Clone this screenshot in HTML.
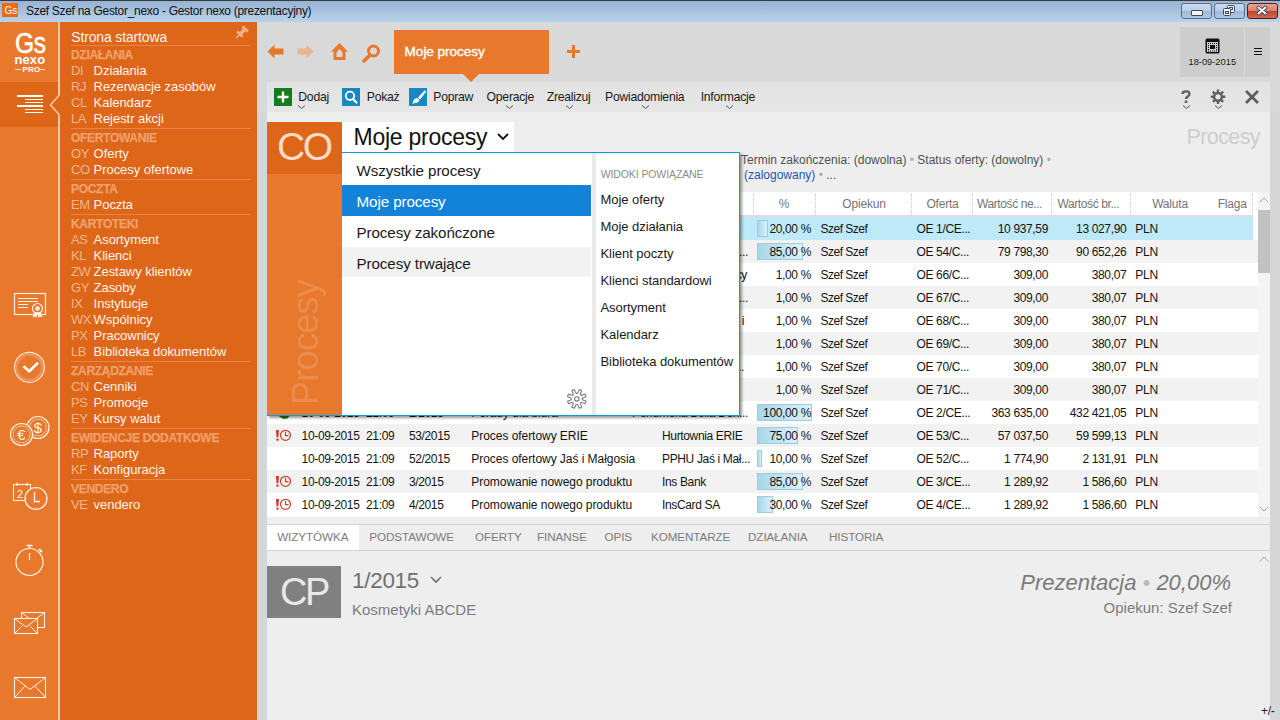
<!DOCTYPE html><html><head><meta charset="utf-8"><style>
html,body{margin:0;padding:0;width:1280px;height:720px;overflow:hidden;background:#EEEEEE;}
body{position:relative;font-family:"Liberation Sans",sans-serif;}
.t{position:absolute;white-space:nowrap;}
.r{position:absolute;display:block;}
</style></head><body>
<div class="r" style="left:0px;top:0px;width:1280px;height:1px;background:#3a3a3a;"></div>
<div class="r" style="left:0px;top:1px;width:1280px;height:21px;background:linear-gradient(#97B3D3,#BAD2EB);"></div>
<svg class="r" style="left:2px;top:3px;" width="16" height="14" viewBox="0 0 16 14"><rect width="16" height="14" fill="#EA6A14"/></svg>
<div class="t" style="top:5.54px;font-size:10px;line-height:10px;color:#fff;left:4.5px;">Gs</div>
<div class="t" style="top:4.84px;font-size:12px;line-height:12px;color:#111;letter-spacing:-0.3px;left:26px;">Szef Szef na Gestor_nexo - Gestor nexo (prezentacyjny)</div>
<div class="r" style="left:1181px;top:3px;width:29px;height:14px;border:1px solid #5C6F8A;border-radius:3px;background:linear-gradient(#C9DBEF 0%,#B6CDE8 50%,#9EBAD9 51%,#AFC8E6 100%);"></div>
<div class="r" style="left:1214px;top:3px;width:29px;height:14px;border:1px solid #5C6F8A;border-radius:3px;background:linear-gradient(#C9DBEF 0%,#B6CDE8 50%,#9EBAD9 51%,#AFC8E6 100%);"></div>
<div class="r" style="left:1247px;top:3px;width:29px;height:14px;border:1px solid #5A1A1A;border-radius:3px;background:linear-gradient(#E9A290 0%,#DB7F68 50%,#C4412A 51%,#D06A52 100%);"></div>
<div class="r" style="left:1191px;top:10px;width:10px;height:4px;background:#F4F4F4;border:1px solid #3C4A5C;border-radius:1px;"></div>
<svg class="r" style="left:1222px;top:5px;" width="14" height="12" viewBox="0 0 14 12"><rect x="5.5" y="0.5" width="7" height="7" rx="1" fill="#f2f2f2" stroke="#3C4A5C"/><rect x="7.5" y="2.5" width="3" height="2" fill="none" stroke="#3C4A5C"/><rect x="1.5" y="3.5" width="7" height="7" rx="1" fill="#f2f2f2" stroke="#3C4A5C"/><rect x="3.5" y="6.5" width="3" height="2" fill="none" stroke="#3C4A5C"/></svg>
<svg class="r" style="left:1255px;top:5px;" width="14" height="11" viewBox="0 0 14 11"><path d="M3.5 2.5 L10.5 8.5 M10.5 2.5 L3.5 8.5" stroke="#3C4A5C" stroke-width="3.8" stroke-linecap="round"/><path d="M3.5 2.5 L10.5 8.5 M10.5 2.5 L3.5 8.5" stroke="#F6F6F6" stroke-width="2" stroke-linecap="round"/></svg>
<div class="r" style="left:0px;top:22px;width:58px;height:698px;background:#E8792C;"></div>
<div class="r" style="left:0px;top:82px;width:58px;height:45px;background:#DE6619;"></div>
<div class="r" style="left:58px;top:22px;width:2px;height:698px;background:#F4C6A2;"></div>
<div class="r" style="left:60px;top:22px;width:197px;height:698px;background:#DE6619;"></div>
<div class="t" style="top:27.61px;font-size:30px;line-height:30px;color:#fff;letter-spacing:-0.5px;left:14.5px;transform:scaleX(0.82);transform-origin:0 0;-webkit-text-stroke:0.6px #fff;">Gs</div>
<div class="t" style="top:53.00px;font-size:13px;line-height:13px;color:#fff;letter-spacing:0.1px;left:14.5px;font-weight:bold;">nexo</div>
<div class="t" style="top:65.73px;font-size:8px;line-height:8px;color:#fff;letter-spacing:0.2px;left:22.5px;font-weight:bold;">PRO</div>
<div class="r" style="left:15px;top:69px;width:6px;height:1px;background:#F9D9C0;"></div>
<div class="r" style="left:39px;top:69px;width:6px;height:1px;background:#F9D9C0;"></div>
<div class="r" style="left:17px;top:95px;width:26px;height:2px;background:#fff;"></div>
<div class="r" style="left:25px;top:99px;width:18px;height:1px;background:#fff;"></div>
<div class="r" style="left:25px;top:102px;width:18px;height:1px;background:#fff;"></div>
<div class="r" style="left:17px;top:105px;width:26px;height:2px;background:#fff;"></div>
<div class="r" style="left:25px;top:109px;width:18px;height:1px;background:#fff;"></div>
<div class="r" style="left:25px;top:112px;width:18px;height:1px;background:#fff;"></div>
<div class="r" style="left:58px;top:95px;width:2px;height:21px;background:#DE6619;"></div>
<svg class="r" style="left:48px;top:93px;" width="13" height="24" viewBox="0 0 13 24"><path d="M11 1 L11 2.5 L2.5 12 L11 21.5 L11 24" fill="none" stroke="#F4C6A2" stroke-width="1.6"/></svg>
<svg class="r" style="left:12px;top:290px;" width="38" height="30" viewBox="0 0 38 30"><rect x="2.5" y="3.5" width="31" height="21" fill="none" stroke="#FDF0E6" stroke-width="1.2"/><path d="M6 8.5H26 M6 11.5H26 M6 14.5H16 M6 17.5H16" stroke="#FDF0E6" stroke-width="1"/><circle cx="25.5" cy="18.5" r="5" fill="#E8792C" stroke="#FDF0E6" stroke-width="1.2"/><circle cx="25.5" cy="18.5" r="2.3" fill="#FDF0E6"/><path d="M22.5 22 L20.5 27.5 L23 26.5 L24.5 28 L25.5 23 L26.5 28 L28 26.5 L30.5 27.5 L28.5 22" fill="#FDF0E6"/></svg>
<svg class="r" style="left:13px;top:351px;" width="34" height="34" viewBox="0 0 34 34"><circle cx="16.5" cy="16.3" r="15" fill="none" stroke="#FDF0E6" stroke-width="1.2" opacity="0.9"/><circle cx="16.5" cy="16.3" r="12.8" fill="none" stroke="#FDF0E6" stroke-width="2.6" opacity="0.22"/><path d="M10.5 15.3 L16.3 20.3 L25 11.8" fill="none" stroke="#fff" stroke-width="2.6"/></svg>
<svg class="r" style="left:8px;top:413px;" width="44" height="36" viewBox="0 0 44 36"><circle cx="30" cy="14.5" r="11" fill="#E8792C" stroke="#FDF0E6" stroke-width="1.2"/><circle cx="30" cy="14.5" r="8.5" fill="none" stroke="#FDF0E6" stroke-width="0.6"/><text x="30" y="20" font-family="Liberation Sans" font-size="15" fill="#FDF0E6" text-anchor="middle">$</text><circle cx="13.5" cy="21.5" r="11" fill="#E8792C" stroke="#FDF0E6" stroke-width="1.2"/><circle cx="13.5" cy="21.5" r="8.5" fill="none" stroke="#FDF0E6" stroke-width="0.6"/><text x="13.5" y="27" font-family="Liberation Sans" font-size="15" fill="#FDF0E6" text-anchor="middle">€</text></svg>
<svg class="r" style="left:10px;top:480px;" width="40" height="32" viewBox="0 0 40 32"><rect x="3.5" y="4.5" width="17" height="16" fill="none" stroke="#FDF0E6" stroke-width="1.1"/><path d="M7 2.5V6 M17 2.5V6" stroke="#FDF0E6" stroke-width="1.1"/><text x="7" y="17.5" font-family="Liberation Sans" font-size="11" fill="#FDF0E6">2</text><circle cx="26" cy="18.5" r="11" fill="#E8792C" stroke="#FDF0E6" stroke-width="1.2"/><path d="M24.5 12V21.5H30" fill="none" stroke="#FDF0E6" stroke-width="1.4"/><path d="M26 8.5V9.5 M26 27.5V28.5 M15.5 18.5H16.5 M35.5 18.5H36.5" stroke="#FDF0E6" stroke-width="1"/></svg>
<svg class="r" style="left:14px;top:543px;" width="32" height="34" viewBox="0 0 32 34"><circle cx="15.5" cy="19" r="13.5" fill="none" stroke="#FDF0E6" stroke-width="1.2"/><path d="M15.5 10V17" stroke="#FDF0E6" stroke-width="1.2"/><path d="M12.5 2.5H18.5 M15.5 2.5V5.5" stroke="#FDF0E6" stroke-width="1.6"/><path d="M25 6 L28 9" stroke="#FDF0E6" stroke-width="2"/></svg>
<svg class="r" style="left:12px;top:610px;" width="36" height="26" viewBox="0 0 36 26"><rect x="9.5" y="2.5" width="23" height="15" fill="#E8792C" stroke="#FDF0E6" stroke-width="1.1"/><path d="M9.5 2.5 L21 11 L32.5 2.5" fill="none" stroke="#FDF0E6" stroke-width="1"/><rect x="2.5" y="8.5" width="23" height="15" fill="#E8792C" stroke="#FDF0E6" stroke-width="1.1"/><path d="M2.5 8.5 L14 17 L25.5 8.5 M2.5 23.5 L10 16 M25.5 23.5 L18 16" fill="none" stroke="#FDF0E6" stroke-width="1"/></svg>
<svg class="r" style="left:12px;top:675px;" width="36" height="25" viewBox="0 0 36 25"><rect x="2.5" y="2.5" width="31" height="20" fill="none" stroke="#FDF0E6" stroke-width="1.1"/><path d="M2.5 2.5 L18 14.5 L33.5 2.5 M2.5 22.5 L13 11 M33.5 22.5 L23 11" fill="none" stroke="#FDF0E6" stroke-width="1"/></svg>
<div class="t" style="top:30.15px;font-size:14px;line-height:14px;color:#FDF3EA;letter-spacing:-0.15px;left:71.25px;">Strona startowa</div>
<svg class="r" style="left:233px;top:24px;" width="18" height="17" viewBox="0 0 18 17"><g stroke="#F0B088" stroke-linecap="butt"><path d="M9.5 2.5 L14.8 7.6" stroke-width="3"/><path d="M12.2 5 L7 10.2" stroke-width="3.6"/><path d="M4.1 7.5 L9.6 12.8" stroke-width="2.6"/><path d="M7 10.2 L3.2 14" stroke-width="1.4"/></g></svg>
<div class="r" style="left:71px;top:45px;width:180px;height:1px;background:#E6844A;"></div>
<div class="t" style="top:48.54px;font-size:12px;line-height:12px;color:#F0A06C;letter-spacing:-0.3px;left:71px;font-weight:bold;-webkit-text-stroke:0.25px #F0A06C;">DZIAŁANIA</div>
<div class="t" style="top:63.80px;font-size:13px;line-height:13px;color:#F0B48A;letter-spacing:-0.4px;left:71px;">DI</div>
<div class="t" style="top:63.80px;font-size:13px;line-height:13px;color:#FDF3EA;letter-spacing:-0.05px;left:93.6px;">Działania</div>
<div class="t" style="top:79.80px;font-size:13px;line-height:13px;color:#F0B48A;letter-spacing:-0.4px;left:71px;">RJ</div>
<div class="t" style="top:79.80px;font-size:13px;line-height:13px;color:#FDF3EA;letter-spacing:-0.05px;left:93.6px;">Rezerwacje zasobów</div>
<div class="t" style="top:95.80px;font-size:13px;line-height:13px;color:#F0B48A;letter-spacing:-0.4px;left:71px;">CL</div>
<div class="t" style="top:95.80px;font-size:13px;line-height:13px;color:#FDF3EA;letter-spacing:-0.05px;left:93.6px;">Kalendarz</div>
<div class="t" style="top:111.60px;font-size:13px;line-height:13px;color:#F0B48A;letter-spacing:-0.4px;left:71px;">LA</div>
<div class="t" style="top:111.60px;font-size:13px;line-height:13px;color:#FDF3EA;letter-spacing:-0.05px;left:93.6px;">Rejestr akcji</div>
<div class="r" style="left:71px;top:128px;width:180px;height:1px;background:#E6844A;"></div>
<div class="t" style="top:131.54px;font-size:12px;line-height:12px;color:#F0A06C;letter-spacing:-0.3px;left:71px;font-weight:bold;-webkit-text-stroke:0.25px #F0A06C;">OFERTOWANIE</div>
<div class="t" style="top:146.80px;font-size:13px;line-height:13px;color:#F0B48A;letter-spacing:-0.4px;left:71px;">OY</div>
<div class="t" style="top:146.80px;font-size:13px;line-height:13px;color:#FDF3EA;letter-spacing:-0.05px;left:93.6px;">Oferty</div>
<div class="t" style="top:162.80px;font-size:13px;line-height:13px;color:#F0B48A;letter-spacing:-0.4px;left:71px;">CO</div>
<div class="t" style="top:162.80px;font-size:13px;line-height:13px;color:#FDF3EA;letter-spacing:-0.05px;left:93.6px;">Procesy ofertowe</div>
<div class="r" style="left:71px;top:179px;width:180px;height:1px;background:#E6844A;"></div>
<div class="t" style="top:182.54px;font-size:12px;line-height:12px;color:#F0A06C;letter-spacing:-0.3px;left:71px;font-weight:bold;-webkit-text-stroke:0.25px #F0A06C;">POCZTA</div>
<div class="t" style="top:197.80px;font-size:13px;line-height:13px;color:#F0B48A;letter-spacing:-0.4px;left:71px;">EM</div>
<div class="t" style="top:197.80px;font-size:13px;line-height:13px;color:#FDF3EA;letter-spacing:-0.05px;left:93.6px;">Poczta</div>
<div class="r" style="left:71px;top:214px;width:180px;height:1px;background:#E6844A;"></div>
<div class="t" style="top:217.54px;font-size:12px;line-height:12px;color:#F0A06C;letter-spacing:-0.3px;left:71px;font-weight:bold;-webkit-text-stroke:0.25px #F0A06C;">KARTOTEKI</div>
<div class="t" style="top:232.80px;font-size:13px;line-height:13px;color:#F0B48A;letter-spacing:-0.4px;left:71px;">AS</div>
<div class="t" style="top:232.80px;font-size:13px;line-height:13px;color:#FDF3EA;letter-spacing:-0.05px;left:93.6px;">Asortyment</div>
<div class="t" style="top:248.80px;font-size:13px;line-height:13px;color:#F0B48A;letter-spacing:-0.4px;left:71px;">KL</div>
<div class="t" style="top:248.80px;font-size:13px;line-height:13px;color:#FDF3EA;letter-spacing:-0.05px;left:93.6px;">Klienci</div>
<div class="t" style="top:264.80px;font-size:13px;line-height:13px;color:#F0B48A;letter-spacing:-0.4px;left:71px;">ZW</div>
<div class="t" style="top:264.80px;font-size:13px;line-height:13px;color:#FDF3EA;letter-spacing:-0.05px;left:93.6px;">Zestawy klientów</div>
<div class="t" style="top:280.80px;font-size:13px;line-height:13px;color:#F0B48A;letter-spacing:-0.4px;left:71px;">GY</div>
<div class="t" style="top:280.80px;font-size:13px;line-height:13px;color:#FDF3EA;letter-spacing:-0.05px;left:93.6px;">Zasoby</div>
<div class="t" style="top:296.80px;font-size:13px;line-height:13px;color:#F0B48A;letter-spacing:-0.4px;left:71px;">IX</div>
<div class="t" style="top:296.80px;font-size:13px;line-height:13px;color:#FDF3EA;letter-spacing:-0.05px;left:93.6px;">Instytucje</div>
<div class="t" style="top:312.80px;font-size:13px;line-height:13px;color:#F0B48A;letter-spacing:-0.4px;left:71px;">WX</div>
<div class="t" style="top:312.80px;font-size:13px;line-height:13px;color:#FDF3EA;letter-spacing:-0.05px;left:93.6px;">Wspólnicy</div>
<div class="t" style="top:328.80px;font-size:13px;line-height:13px;color:#F0B48A;letter-spacing:-0.4px;left:71px;">PX</div>
<div class="t" style="top:328.80px;font-size:13px;line-height:13px;color:#FDF3EA;letter-spacing:-0.05px;left:93.6px;">Pracownicy</div>
<div class="t" style="top:344.80px;font-size:13px;line-height:13px;color:#F0B48A;letter-spacing:-0.4px;left:71px;">LB</div>
<div class="t" style="top:344.80px;font-size:13px;line-height:13px;color:#FDF3EA;letter-spacing:-0.05px;left:93.6px;">Biblioteka dokumentów</div>
<div class="r" style="left:71px;top:361px;width:180px;height:1px;background:#E6844A;"></div>
<div class="t" style="top:364.54px;font-size:12px;line-height:12px;color:#F0A06C;letter-spacing:-0.3px;left:71px;font-weight:bold;-webkit-text-stroke:0.25px #F0A06C;">ZARZĄDZANIE</div>
<div class="t" style="top:379.80px;font-size:13px;line-height:13px;color:#F0B48A;letter-spacing:-0.4px;left:71px;">CN</div>
<div class="t" style="top:379.80px;font-size:13px;line-height:13px;color:#FDF3EA;letter-spacing:-0.05px;left:93.6px;">Cenniki</div>
<div class="t" style="top:395.80px;font-size:13px;line-height:13px;color:#F0B48A;letter-spacing:-0.4px;left:71px;">PS</div>
<div class="t" style="top:395.80px;font-size:13px;line-height:13px;color:#FDF3EA;letter-spacing:-0.05px;left:93.6px;">Promocje</div>
<div class="t" style="top:411.80px;font-size:13px;line-height:13px;color:#F0B48A;letter-spacing:-0.4px;left:71px;">EY</div>
<div class="t" style="top:411.80px;font-size:13px;line-height:13px;color:#FDF3EA;letter-spacing:-0.05px;left:93.6px;">Kursy walut</div>
<div class="r" style="left:71px;top:428px;width:180px;height:1px;background:#E6844A;"></div>
<div class="t" style="top:431.54px;font-size:12px;line-height:12px;color:#F0A06C;letter-spacing:-0.3px;left:71px;font-weight:bold;-webkit-text-stroke:0.25px #F0A06C;">EWIDENCJE DODATKOWE</div>
<div class="t" style="top:446.80px;font-size:13px;line-height:13px;color:#F0B48A;letter-spacing:-0.4px;left:71px;">RP</div>
<div class="t" style="top:446.80px;font-size:13px;line-height:13px;color:#FDF3EA;letter-spacing:-0.05px;left:93.6px;">Raporty</div>
<div class="t" style="top:462.80px;font-size:13px;line-height:13px;color:#F0B48A;letter-spacing:-0.4px;left:71px;">KF</div>
<div class="t" style="top:462.80px;font-size:13px;line-height:13px;color:#FDF3EA;letter-spacing:-0.05px;left:93.6px;">Konfiguracja</div>
<div class="r" style="left:71px;top:479px;width:180px;height:1px;background:#E6844A;"></div>
<div class="t" style="top:482.54px;font-size:12px;line-height:12px;color:#F0A06C;letter-spacing:-0.3px;left:71px;font-weight:bold;-webkit-text-stroke:0.25px #F0A06C;">VENDERO</div>
<div class="t" style="top:497.80px;font-size:13px;line-height:13px;color:#F0B48A;letter-spacing:-0.4px;left:71px;">VE</div>
<div class="t" style="top:497.80px;font-size:13px;line-height:13px;color:#FDF3EA;letter-spacing:-0.05px;left:93.6px;">vendero</div>
<div class="r" style="left:257px;top:22px;width:1023px;height:698px;background:#D6D6D6;"></div>
<div class="r" style="left:257px;top:22px;width:1023px;height:90px;background:#D9D9D9;"></div>
<svg class="r" style="left:266px;top:44px;" width="19" height="15" viewBox="0 0 19 15"><path d="M1.5 7.5 L8.5 0.5 V4.5 H17.5 V10.5 H8.5 V14.5 Z" fill="#E8792C"/></svg>
<svg class="r" style="left:296px;top:44px;" width="19" height="15" viewBox="0 0 19 15"><path d="M17.5 7.5 L10.5 0.5 V4.5 H1.5 V10.5 H10.5 V14.5 Z" fill="#EBB48C"/></svg>
<svg class="r" style="left:330px;top:42px;" width="19" height="19" viewBox="0 0 19 19"><path d="M9.5 1 L18 9.5 H15.5 V18 H3.5 V9.5 H1 Z M6.5 10.5 V15 H12.5 V10.5 L9.5 7 Z" fill="#E8792C" fill-rule="evenodd"/></svg>
<svg class="r" style="left:362px;top:44px;" width="19" height="19" viewBox="0 0 19 19"><circle cx="11.5" cy="7" r="5" fill="none" stroke="#E8792C" stroke-width="3"/><path d="M8 11 L2 17" stroke="#E8792C" stroke-width="3.6" stroke-linecap="round"/></svg>
<div class="r" style="left:394px;top:30px;width:155px;height:44px;background:#E8792C;"></div>
<svg class="r" style="left:462px;top:73px;" width="18" height="10" viewBox="0 0 18 10"><path d="M0 0 H18 L9 9 Z" fill="#E8792C"/></svg>
<div class="t" style="top:44.89px;font-size:13.6px;line-height:13.6px;color:#FFFFFF;letter-spacing:-0.05px;left:404.6px;-webkit-text-stroke:0.35px #fff;">Moje procesy</div>
<svg class="r" style="left:566px;top:44px;" width="15" height="15" viewBox="0 0 15 15"><path d="M7.5 1 V14 M1 7.5 H14" stroke="#E8792C" stroke-width="3"/></svg>
<div class="r" style="left:1180px;top:27px;width:64px;height:50px;background:#CDCDCD;"></div>
<div class="r" style="left:1245px;top:27px;width:25px;height:50px;background:#CDCDCD;"></div>
<svg class="r" style="left:1205px;top:38px;" width="15" height="16" viewBox="0 0 15 16"><rect x="0.5" y="0.5" width="14" height="15" rx="1.5" fill="#111"/><rect x="2" y="4" width="11" height="10" fill="#CDCDCD"/><g fill="#111"><rect x="3" y="5" width="1" height="1"/><rect x="5" y="5" width="1" height="1"/><rect x="7" y="5" width="1" height="1"/><rect x="9" y="5" width="1" height="1"/><rect x="11" y="5" width="1" height="1"/><rect x="3" y="7" width="1" height="1"/><rect x="5" y="7" width="5" height="4"/><rect x="11" y="7" width="1" height="1"/><rect x="3" y="9" width="1" height="1"/><rect x="11" y="9" width="1" height="1"/><rect x="3" y="11" width="1" height="1"/><rect x="11" y="11" width="1" height="1"/><rect x="3" y="12.5" width="1" height="1"/><rect x="5" y="12.5" width="1" height="1"/><rect x="7" y="12.5" width="1" height="1"/><rect x="9" y="12.5" width="1" height="1"/><rect x="11" y="12.5" width="1" height="1"/></g></svg>
<div class="t" style="top:58.13px;font-size:9.3px;line-height:9.3px;color:#1a1a1a;left:1188.5px;">18-09-2015</div>
<div class="r" style="left:1254px;top:48px;width:8px;height:1px;background:#111;"></div>
<div class="r" style="left:1254px;top:51px;width:8px;height:1px;background:#111;"></div>
<div class="r" style="left:1254px;top:54px;width:8px;height:1px;background:#111;"></div>
<div class="r" style="left:267px;top:82px;width:1003px;height:30px;background:linear-gradient(#E2E2E2,#E6E6E6);"></div>
<svg class="r" style="left:274px;top:88px;" width="18" height="18" viewBox="0 0 18 18"><rect width="18" height="18" fill="#127D1E"/><path d="M9 3.5 V14.5 M3.5 9 H14.5" stroke="#fff" stroke-width="2.4"/></svg>
<svg class="r" style="left:342px;top:88px;" width="18" height="18" viewBox="0 0 18 18"><rect width="18" height="18" fill="#1A87C0"/><circle cx="8" cy="7.8" r="4.2" fill="none" stroke="#fff" stroke-width="1.8"/><path d="M11 11 L14.5 14.5" stroke="#fff" stroke-width="2.2" stroke-linecap="round"/></svg>
<svg class="r" style="left:409px;top:88px;" width="18" height="18" viewBox="0 0 18 18"><rect width="18" height="18" fill="#1A87C0"/><path d="M16 2 L9 9.5 L11 11.5 L17 4 Z" fill="#fff"/><path d="M8.5 10 C5 10 4.5 13 3 15.5 C6.5 15.5 10 14.5 10.5 12 Z" fill="#fff"/><path d="M0 18 L4 14" stroke="#1A87C0"/></svg>
<div class="t" style="top:90.67px;font-size:12.2px;line-height:12.2px;color:#1a1a1a;letter-spacing:-0.25px;left:298.3px;">Dodaj</div>
<svg class="r" style="left:297.0px;top:104px;" width="9" height="6" viewBox="0 0 9 6"><path d="M1 1.5 L4.5 4.5 L8 1.5" fill="none" stroke="#555" stroke-width="1"/></svg>
<div class="t" style="top:90.67px;font-size:12.2px;line-height:12.2px;color:#1a1a1a;letter-spacing:-0.25px;left:366.8px;">Pokaż</div>
<div class="t" style="top:90.67px;font-size:12.2px;line-height:12.2px;color:#1a1a1a;letter-spacing:-0.25px;left:433.3px;">Popraw</div>
<div class="t" style="top:90.67px;font-size:12.2px;line-height:12.2px;color:#1a1a1a;letter-spacing:-0.25px;left:486.6px;">Operacje</div>
<svg class="r" style="left:505.3px;top:104px;" width="9" height="6" viewBox="0 0 9 6"><path d="M1 1.5 L4.5 4.5 L8 1.5" fill="none" stroke="#555" stroke-width="1"/></svg>
<div class="t" style="top:90.67px;font-size:12.2px;line-height:12.2px;color:#1a1a1a;letter-spacing:-0.25px;left:546.7px;">Zrealizuj</div>
<svg class="r" style="left:565.0px;top:104px;" width="9" height="6" viewBox="0 0 9 6"><path d="M1 1.5 L4.5 4.5 L8 1.5" fill="none" stroke="#555" stroke-width="1"/></svg>
<div class="t" style="top:90.67px;font-size:12.2px;line-height:12.2px;color:#1a1a1a;letter-spacing:-0.25px;left:605px;">Powiadomienia</div>
<svg class="r" style="left:640.9px;top:104px;" width="9" height="6" viewBox="0 0 9 6"><path d="M1 1.5 L4.5 4.5 L8 1.5" fill="none" stroke="#555" stroke-width="1"/></svg>
<div class="t" style="top:90.67px;font-size:12.2px;line-height:12.2px;color:#1a1a1a;letter-spacing:-0.25px;left:700.7px;">Informacje</div>
<svg class="r" style="left:724.8px;top:104px;" width="9" height="6" viewBox="0 0 9 6"><path d="M1 1.5 L4.5 4.5 L8 1.5" fill="none" stroke="#555" stroke-width="1"/></svg>
<svg class="r" style="left:1180px;top:90px;" width="12" height="14" viewBox="0 0 12 14"><path d="M2.5 4 C2.5 0.5 9.5 0.5 9.5 4 C9.5 6.5 6 6.5 6 9" fill="none" stroke="#5E5E5E" stroke-width="2.4"/><rect x="4.7" y="10.5" width="2.6" height="2.5" fill="#5E5E5E"/></svg>
<svg class="r" style="left:1181.5px;top:104px;" width="9" height="6" viewBox="0 0 9 6"><path d="M1 1.5 L4.5 4.5 L8 1.5" fill="none" stroke="#555" stroke-width="1"/></svg>
<svg class="r" style="left:1210px;top:89px;" width="16" height="16" viewBox="0 0 16 16"><g transform="translate(8 7.8)"><circle r="3.9" fill="none" stroke="#5E5E5E" stroke-width="2.5"/><g stroke="#5E5E5E" stroke-width="2.4"><path d="M0 -7.2V-4.5 M0 7.2V4.5 M-7.2 0H-4.5 M7.2 0H4.5 M-5.1 -5.1L-3.2 -3.2 M5.1 5.1L3.2 3.2 M-5.1 5.1L-3.2 3.2 M5.1 -5.1L3.2 -3.2"/></g></g></svg>
<svg class="r" style="left:1213.5px;top:104px;" width="9" height="6" viewBox="0 0 9 6"><path d="M1 1.5 L4.5 4.5 L8 1.5" fill="none" stroke="#555" stroke-width="1"/></svg>
<svg class="r" style="left:1244px;top:89px;" width="16" height="16" viewBox="0 0 16 16"><path d="M2 2 L14 14 M14 2 L2 14" stroke="#5E5E5E" stroke-width="2.8"/></svg>
<div class="r" style="left:267px;top:112px;width:1003px;height:608px;background:#EEEEEE;"></div>
<div class="r" style="left:1270px;top:112px;width:10px;height:608px;background:#D6D6D6;"></div>
<div class="t" style="top:127.20px;font-size:21.5px;line-height:21.5px;color:#CDCDCD;letter-spacing:-0.6px;right:20px;">Procesy</div>
<div class="t" style="top:153.84px;font-size:12px;line-height:12px;color:#505050;left:741px;">Termin zakończenia: (dowolna) <span style="color:#B0B0B0">•</span> Status oferty: (dowolny) <span style="color:#B0B0B0">•</span></div>
<div class="t" style="top:168.84px;font-size:12px;line-height:12px;color:#505050;left:744px;"><span style="color:#2552B8">(zalogowany)</span> <span style="color:#B0B0B0">•</span> ...</div>
<div class="r" style="left:267px;top:192px;width:991px;height:325px;background:#FFFFFF;"></div>
<div class="r" style="left:267px;top:215px;width:986px;height:2px;background:#DCDCDC;"></div>
<div class="r" style="left:753px;top:194px;width:0;height:20px;border-left:1px dotted #C8C8C8;"></div>
<div class="r" style="left:815px;top:194px;width:0;height:20px;border-left:1px dotted #C8C8C8;"></div>
<div class="r" style="left:911px;top:194px;width:0;height:20px;border-left:1px dotted #C8C8C8;"></div>
<div class="r" style="left:972px;top:194px;width:0;height:20px;border-left:1px dotted #C8C8C8;"></div>
<div class="r" style="left:1051px;top:194px;width:0;height:20px;border-left:1px dotted #C8C8C8;"></div>
<div class="r" style="left:1130px;top:194px;width:0;height:20px;border-left:1px dotted #C8C8C8;"></div>
<div class="r" style="left:1252px;top:194px;width:0;height:20px;border-left:1px dotted #C8C8C8;"></div>
<div class="t" style="top:197.84px;font-size:12px;line-height:12px;color:#757575;left:784px;transform:translateX(-50%);">%</div>
<div class="t" style="top:197.84px;font-size:12px;line-height:12px;color:#757575;letter-spacing:-0.2px;left:864px;transform:translateX(-50%);">Opiekun</div>
<div class="t" style="top:197.84px;font-size:12px;line-height:12px;color:#757575;letter-spacing:-0.2px;left:942.5px;transform:translateX(-50%);">Oferta</div>
<div class="t" style="top:197.84px;font-size:12px;line-height:12px;color:#757575;letter-spacing:-0.4px;left:977px;">Wartość ne...</div>
<div class="t" style="top:197.84px;font-size:12px;line-height:12px;color:#757575;letter-spacing:-0.4px;left:1057.5px;">Wartość br...</div>
<div class="t" style="top:197.84px;font-size:12px;line-height:12px;color:#757575;letter-spacing:-0.2px;left:1170px;transform:translateX(-50%);">Waluta</div>
<div class="t" style="top:197.84px;font-size:12px;line-height:12px;color:#757575;letter-spacing:-0.2px;left:1217.7px;">Flaga</div>
<div class="r" style="left:267px;top:217px;width:986px;height:23px;background:#BEE9F9;"></div>
<div class="t" style="top:222.84px;font-size:12px;line-height:12px;color:#141414;letter-spacing:-0.35px;left:301.6px;">10-09-2015</div>
<div class="t" style="top:222.84px;font-size:12px;line-height:12px;color:#141414;letter-spacing:-0.35px;left:366px;">21:09</div>
<div class="t" style="top:222.84px;font-size:12px;line-height:12px;color:#141414;letter-spacing:-0.35px;left:408.9px;">1/2015</div>
<div class="t" style="top:222.84px;font-size:12px;line-height:12px;color:#141414;letter-spacing:-0.05px;left:471.3px;">Proces ofertowy Kosmetyki</div>
<div class="t" style="top:222.84px;font-size:12px;line-height:12px;color:#141414;letter-spacing:-0.35px;left:662px;">Kosmetyki ABC</div>
<div class="r" style="left:757px;top:220px;width:10.9px;height:17px;background:linear-gradient(90deg,#A9D6E8,#DDF0F8);box-sizing:border-box;border:1px solid #9ACDE2;"></div>
<div class="t" style="top:222.84px;font-size:12px;line-height:12px;color:#141414;letter-spacing:-0.35px;right:469px;">20,00 %</div>
<div class="t" style="top:222.84px;font-size:12px;line-height:12px;color:#141414;letter-spacing:-0.5px;left:820.5px;">Szef Szef</div>
<div class="t" style="top:222.84px;font-size:12px;line-height:12px;color:#141414;letter-spacing:-0.35px;left:916.5px;">OE 1/CE...</div>
<div class="t" style="top:222.84px;font-size:12px;line-height:12px;color:#141414;letter-spacing:-0.35px;right:232px;">10 937,59</div>
<div class="t" style="top:222.84px;font-size:12px;line-height:12px;color:#141414;letter-spacing:-0.35px;right:153.70000000000005px;">13 027,90</div>
<div class="t" style="top:222.84px;font-size:12px;line-height:12px;color:#141414;letter-spacing:-0.2px;left:1135.3px;">PLN</div>
<div class="r" style="left:267px;top:240px;width:991px;height:23px;background:#F2F2F2;"></div>
<svg class="r" style="left:274px;top:245px;" width="20" height="14" viewBox="0 0 20 14"><path d="M1.9 1 H5 L4.4 8.3 H2.5 Z" fill="#D23B2B"/><rect x="2.4" y="9.5" width="2.2" height="2.2" fill="#D23B2B"/><circle cx="11.5" cy="6.3" r="5" fill="none" stroke="#D23B2B" stroke-width="1.2"/><path d="M11.5 2.8V6.6H14.6" fill="none" stroke="#D23B2B" stroke-width="1.2"/></svg>
<div class="t" style="top:245.84px;font-size:12px;line-height:12px;color:#141414;letter-spacing:-0.35px;left:301.6px;">10-09-2015</div>
<div class="t" style="top:245.84px;font-size:12px;line-height:12px;color:#141414;letter-spacing:-0.35px;left:366px;">21:09</div>
<div class="t" style="top:245.84px;font-size:12px;line-height:12px;color:#141414;letter-spacing:-0.35px;left:408.9px;">54/2015</div>
<div class="t" style="top:245.84px;font-size:12px;line-height:12px;color:#141414;letter-spacing:-0.05px;left:471.3px;">Proces ofertowy</div>
<div class="t" style="top:245.84px;font-size:12px;line-height:12px;color:#141414;letter-spacing:-0.35px;right:532px;">Hurtownia Zabawek...</div>
<div class="r" style="left:757px;top:243px;width:46.325px;height:17px;background:linear-gradient(90deg,#A9D6E8,#DDF0F8);box-sizing:border-box;border:1px solid #9ACDE2;"></div>
<div class="t" style="top:245.84px;font-size:12px;line-height:12px;color:#141414;letter-spacing:-0.35px;right:469px;">85,00 %</div>
<div class="t" style="top:245.84px;font-size:12px;line-height:12px;color:#141414;letter-spacing:-0.5px;left:820.5px;">Szef Szef</div>
<div class="t" style="top:245.84px;font-size:12px;line-height:12px;color:#141414;letter-spacing:-0.35px;left:916.5px;">OE 54/C...</div>
<div class="t" style="top:245.84px;font-size:12px;line-height:12px;color:#141414;letter-spacing:-0.35px;right:232px;">79 798,30</div>
<div class="t" style="top:245.84px;font-size:12px;line-height:12px;color:#141414;letter-spacing:-0.35px;right:153.70000000000005px;">90 652,26</div>
<div class="t" style="top:245.84px;font-size:12px;line-height:12px;color:#141414;letter-spacing:-0.2px;left:1135.3px;">PLN</div>
<svg class="r" style="left:274px;top:268px;" width="20" height="14" viewBox="0 0 20 14"><path d="M1.9 1 H5 L4.4 8.3 H2.5 Z" fill="#D23B2B"/><rect x="2.4" y="9.5" width="2.2" height="2.2" fill="#D23B2B"/><circle cx="11.5" cy="6.3" r="5" fill="none" stroke="#D23B2B" stroke-width="1.2"/><path d="M11.5 2.8V6.6H14.6" fill="none" stroke="#D23B2B" stroke-width="1.2"/></svg>
<div class="t" style="top:268.84px;font-size:12px;line-height:12px;color:#141414;letter-spacing:-0.35px;left:301.6px;">10-09-2015</div>
<div class="t" style="top:268.84px;font-size:12px;line-height:12px;color:#141414;letter-spacing:-0.35px;left:366px;">21:09</div>
<div class="t" style="top:268.84px;font-size:12px;line-height:12px;color:#141414;letter-spacing:-0.35px;left:408.9px;">66/2015</div>
<div class="t" style="top:268.84px;font-size:12px;line-height:12px;color:#141414;letter-spacing:-0.05px;left:471.3px;">Proces ofertowy</div>
<div class="t" style="top:268.84px;font-size:12px;line-height:12px;color:#141414;letter-spacing:-0.35px;right:533px;">Meble Kowalscy</div>
<div class="t" style="top:268.84px;font-size:12px;line-height:12px;color:#141414;letter-spacing:-0.35px;right:469px;">1,00 %</div>
<div class="t" style="top:268.84px;font-size:12px;line-height:12px;color:#141414;letter-spacing:-0.5px;left:820.5px;">Szef Szef</div>
<div class="t" style="top:268.84px;font-size:12px;line-height:12px;color:#141414;letter-spacing:-0.35px;left:916.5px;">OE 66/C...</div>
<div class="t" style="top:268.84px;font-size:12px;line-height:12px;color:#141414;letter-spacing:-0.35px;right:232px;">309,00</div>
<div class="t" style="top:268.84px;font-size:12px;line-height:12px;color:#141414;letter-spacing:-0.35px;right:153.70000000000005px;">380,07</div>
<div class="t" style="top:268.84px;font-size:12px;line-height:12px;color:#141414;letter-spacing:-0.2px;left:1135.3px;">PLN</div>
<div class="r" style="left:267px;top:286px;width:991px;height:23px;background:#F2F2F2;"></div>
<svg class="r" style="left:274px;top:291px;" width="20" height="14" viewBox="0 0 20 14"><path d="M1.9 1 H5 L4.4 8.3 H2.5 Z" fill="#D23B2B"/><rect x="2.4" y="9.5" width="2.2" height="2.2" fill="#D23B2B"/><circle cx="11.5" cy="6.3" r="5" fill="none" stroke="#D23B2B" stroke-width="1.2"/><path d="M11.5 2.8V6.6H14.6" fill="none" stroke="#D23B2B" stroke-width="1.2"/></svg>
<div class="t" style="top:291.84px;font-size:12px;line-height:12px;color:#141414;letter-spacing:-0.35px;left:301.6px;">10-09-2015</div>
<div class="t" style="top:291.84px;font-size:12px;line-height:12px;color:#141414;letter-spacing:-0.35px;left:366px;">21:09</div>
<div class="t" style="top:291.84px;font-size:12px;line-height:12px;color:#141414;letter-spacing:-0.35px;left:408.9px;">67/2015</div>
<div class="t" style="top:291.84px;font-size:12px;line-height:12px;color:#141414;letter-spacing:-0.05px;left:471.3px;">Proces ofertowy</div>
<div class="t" style="top:291.84px;font-size:12px;line-height:12px;color:#141414;letter-spacing:-0.35px;right:532px;">Hurtownia Budowlana...</div>
<div class="t" style="top:291.84px;font-size:12px;line-height:12px;color:#141414;letter-spacing:-0.35px;right:469px;">1,00 %</div>
<div class="t" style="top:291.84px;font-size:12px;line-height:12px;color:#141414;letter-spacing:-0.5px;left:820.5px;">Szef Szef</div>
<div class="t" style="top:291.84px;font-size:12px;line-height:12px;color:#141414;letter-spacing:-0.35px;left:916.5px;">OE 67/C...</div>
<div class="t" style="top:291.84px;font-size:12px;line-height:12px;color:#141414;letter-spacing:-0.35px;right:232px;">309,00</div>
<div class="t" style="top:291.84px;font-size:12px;line-height:12px;color:#141414;letter-spacing:-0.35px;right:153.70000000000005px;">380,07</div>
<div class="t" style="top:291.84px;font-size:12px;line-height:12px;color:#141414;letter-spacing:-0.2px;left:1135.3px;">PLN</div>
<svg class="r" style="left:274px;top:314px;" width="20" height="14" viewBox="0 0 20 14"><path d="M1.9 1 H5 L4.4 8.3 H2.5 Z" fill="#D23B2B"/><rect x="2.4" y="9.5" width="2.2" height="2.2" fill="#D23B2B"/><circle cx="11.5" cy="6.3" r="5" fill="none" stroke="#D23B2B" stroke-width="1.2"/><path d="M11.5 2.8V6.6H14.6" fill="none" stroke="#D23B2B" stroke-width="1.2"/></svg>
<div class="t" style="top:314.84px;font-size:12px;line-height:12px;color:#141414;letter-spacing:-0.35px;left:301.6px;">10-09-2015</div>
<div class="t" style="top:314.84px;font-size:12px;line-height:12px;color:#141414;letter-spacing:-0.35px;left:366px;">21:09</div>
<div class="t" style="top:314.84px;font-size:12px;line-height:12px;color:#141414;letter-spacing:-0.35px;left:408.9px;">68/2015</div>
<div class="t" style="top:314.84px;font-size:12px;line-height:12px;color:#141414;letter-spacing:-0.05px;left:471.3px;">Proces ofertowy</div>
<div class="t" style="top:314.84px;font-size:12px;line-height:12px;color:#141414;letter-spacing:-0.35px;right:536px;">Hurtownia Duo i</div>
<div class="t" style="top:314.84px;font-size:12px;line-height:12px;color:#141414;letter-spacing:-0.35px;right:469px;">1,00 %</div>
<div class="t" style="top:314.84px;font-size:12px;line-height:12px;color:#141414;letter-spacing:-0.5px;left:820.5px;">Szef Szef</div>
<div class="t" style="top:314.84px;font-size:12px;line-height:12px;color:#141414;letter-spacing:-0.35px;left:916.5px;">OE 68/C...</div>
<div class="t" style="top:314.84px;font-size:12px;line-height:12px;color:#141414;letter-spacing:-0.35px;right:232px;">309,00</div>
<div class="t" style="top:314.84px;font-size:12px;line-height:12px;color:#141414;letter-spacing:-0.35px;right:153.70000000000005px;">380,07</div>
<div class="t" style="top:314.84px;font-size:12px;line-height:12px;color:#141414;letter-spacing:-0.2px;left:1135.3px;">PLN</div>
<div class="r" style="left:267px;top:332px;width:991px;height:23px;background:#F2F2F2;"></div>
<svg class="r" style="left:274px;top:337px;" width="20" height="14" viewBox="0 0 20 14"><path d="M1.9 1 H5 L4.4 8.3 H2.5 Z" fill="#D23B2B"/><rect x="2.4" y="9.5" width="2.2" height="2.2" fill="#D23B2B"/><circle cx="11.5" cy="6.3" r="5" fill="none" stroke="#D23B2B" stroke-width="1.2"/><path d="M11.5 2.8V6.6H14.6" fill="none" stroke="#D23B2B" stroke-width="1.2"/></svg>
<div class="t" style="top:337.84px;font-size:12px;line-height:12px;color:#141414;letter-spacing:-0.35px;left:301.6px;">10-09-2015</div>
<div class="t" style="top:337.84px;font-size:12px;line-height:12px;color:#141414;letter-spacing:-0.35px;left:366px;">21:09</div>
<div class="t" style="top:337.84px;font-size:12px;line-height:12px;color:#141414;letter-spacing:-0.35px;left:408.9px;">69/2015</div>
<div class="t" style="top:337.84px;font-size:12px;line-height:12px;color:#141414;letter-spacing:-0.05px;left:471.3px;">Proces ofertowy</div>
<div class="t" style="top:337.84px;font-size:12px;line-height:12px;color:#141414;letter-spacing:-0.35px;left:662px;">Sklep</div>
<div class="t" style="top:337.84px;font-size:12px;line-height:12px;color:#141414;letter-spacing:-0.35px;right:469px;">1,00 %</div>
<div class="t" style="top:337.84px;font-size:12px;line-height:12px;color:#141414;letter-spacing:-0.5px;left:820.5px;">Szef Szef</div>
<div class="t" style="top:337.84px;font-size:12px;line-height:12px;color:#141414;letter-spacing:-0.35px;left:916.5px;">OE 69/C...</div>
<div class="t" style="top:337.84px;font-size:12px;line-height:12px;color:#141414;letter-spacing:-0.35px;right:232px;">309,00</div>
<div class="t" style="top:337.84px;font-size:12px;line-height:12px;color:#141414;letter-spacing:-0.35px;right:153.70000000000005px;">380,07</div>
<div class="t" style="top:337.84px;font-size:12px;line-height:12px;color:#141414;letter-spacing:-0.2px;left:1135.3px;">PLN</div>
<svg class="r" style="left:274px;top:360px;" width="20" height="14" viewBox="0 0 20 14"><path d="M1.9 1 H5 L4.4 8.3 H2.5 Z" fill="#D23B2B"/><rect x="2.4" y="9.5" width="2.2" height="2.2" fill="#D23B2B"/><circle cx="11.5" cy="6.3" r="5" fill="none" stroke="#D23B2B" stroke-width="1.2"/><path d="M11.5 2.8V6.6H14.6" fill="none" stroke="#D23B2B" stroke-width="1.2"/></svg>
<div class="t" style="top:360.84px;font-size:12px;line-height:12px;color:#141414;letter-spacing:-0.35px;left:301.6px;">10-09-2015</div>
<div class="t" style="top:360.84px;font-size:12px;line-height:12px;color:#141414;letter-spacing:-0.35px;left:366px;">21:09</div>
<div class="t" style="top:360.84px;font-size:12px;line-height:12px;color:#141414;letter-spacing:-0.35px;left:408.9px;">70/2015</div>
<div class="t" style="top:360.84px;font-size:12px;line-height:12px;color:#141414;letter-spacing:-0.05px;left:471.3px;">Proces ofertowy</div>
<div class="t" style="top:360.84px;font-size:12px;line-height:12px;color:#141414;letter-spacing:-0.35px;right:536px;">Bank Narodowy SA ...</div>
<div class="t" style="top:360.84px;font-size:12px;line-height:12px;color:#141414;letter-spacing:-0.35px;right:469px;">1,00 %</div>
<div class="t" style="top:360.84px;font-size:12px;line-height:12px;color:#141414;letter-spacing:-0.5px;left:820.5px;">Szef Szef</div>
<div class="t" style="top:360.84px;font-size:12px;line-height:12px;color:#141414;letter-spacing:-0.35px;left:916.5px;">OE 70/C...</div>
<div class="t" style="top:360.84px;font-size:12px;line-height:12px;color:#141414;letter-spacing:-0.35px;right:232px;">309,00</div>
<div class="t" style="top:360.84px;font-size:12px;line-height:12px;color:#141414;letter-spacing:-0.35px;right:153.70000000000005px;">380,07</div>
<div class="t" style="top:360.84px;font-size:12px;line-height:12px;color:#141414;letter-spacing:-0.2px;left:1135.3px;">PLN</div>
<div class="r" style="left:267px;top:378px;width:991px;height:23px;background:#F2F2F2;"></div>
<svg class="r" style="left:274px;top:383px;" width="20" height="14" viewBox="0 0 20 14"><path d="M1.9 1 H5 L4.4 8.3 H2.5 Z" fill="#D23B2B"/><rect x="2.4" y="9.5" width="2.2" height="2.2" fill="#D23B2B"/><circle cx="11.5" cy="6.3" r="5" fill="none" stroke="#D23B2B" stroke-width="1.2"/><path d="M11.5 2.8V6.6H14.6" fill="none" stroke="#D23B2B" stroke-width="1.2"/></svg>
<div class="t" style="top:383.84px;font-size:12px;line-height:12px;color:#141414;letter-spacing:-0.35px;left:301.6px;">10-09-2015</div>
<div class="t" style="top:383.84px;font-size:12px;line-height:12px;color:#141414;letter-spacing:-0.35px;left:366px;">21:09</div>
<div class="t" style="top:383.84px;font-size:12px;line-height:12px;color:#141414;letter-spacing:-0.35px;left:408.9px;">71/2015</div>
<div class="t" style="top:383.84px;font-size:12px;line-height:12px;color:#141414;letter-spacing:-0.05px;left:471.3px;">Proces ofertowy</div>
<div class="t" style="top:383.84px;font-size:12px;line-height:12px;color:#141414;letter-spacing:-0.35px;left:662px;">Druk</div>
<div class="t" style="top:383.84px;font-size:12px;line-height:12px;color:#141414;letter-spacing:-0.35px;right:469px;">1,00 %</div>
<div class="t" style="top:383.84px;font-size:12px;line-height:12px;color:#141414;letter-spacing:-0.5px;left:820.5px;">Szef Szef</div>
<div class="t" style="top:383.84px;font-size:12px;line-height:12px;color:#141414;letter-spacing:-0.35px;left:916.5px;">OE 71/C...</div>
<div class="t" style="top:383.84px;font-size:12px;line-height:12px;color:#141414;letter-spacing:-0.35px;right:232px;">309,00</div>
<div class="t" style="top:383.84px;font-size:12px;line-height:12px;color:#141414;letter-spacing:-0.35px;right:153.70000000000005px;">380,07</div>
<div class="t" style="top:383.84px;font-size:12px;line-height:12px;color:#141414;letter-spacing:-0.2px;left:1135.3px;">PLN</div>
<svg class="r" style="left:274px;top:402px;" width="20" height="18" viewBox="0 0 20 18"><path d="M3.7 10 L15.6 10 L15.6 14 L13 16.7 L9 16.7 L3.7 13.5 Z" fill="#1F7A1F"/></svg>
<div class="t" style="top:406.84px;font-size:12px;line-height:12px;color:#141414;letter-spacing:-0.35px;left:301.6px;">10-09-2015</div>
<div class="t" style="top:406.84px;font-size:12px;line-height:12px;color:#141414;letter-spacing:-0.35px;left:366px;">21:09</div>
<div class="t" style="top:406.84px;font-size:12px;line-height:12px;color:#141414;letter-spacing:-0.35px;left:408.9px;">2/2015</div>
<div class="t" style="top:406.84px;font-size:12px;line-height:12px;color:#141414;letter-spacing:-0.05px;left:471.3px;">Porady dla biura</div>
<div class="t" style="top:406.84px;font-size:12px;line-height:12px;color:#141414;letter-spacing:-0.35px;right:532px;">Perfumeria Bella Don...</div>
<div class="r" style="left:757px;top:404px;width:54.5px;height:17px;background:linear-gradient(90deg,#A9D6E8,#DDF0F8);box-sizing:border-box;border:1px solid #9ACDE2;"></div>
<div class="t" style="top:406.84px;font-size:12px;line-height:12px;color:#141414;letter-spacing:-0.35px;right:469px;">100,00 %</div>
<div class="t" style="top:406.84px;font-size:12px;line-height:12px;color:#141414;letter-spacing:-0.5px;left:820.5px;">Szef Szef</div>
<div class="t" style="top:406.84px;font-size:12px;line-height:12px;color:#141414;letter-spacing:-0.35px;left:916.5px;">OE 2/CE...</div>
<div class="t" style="top:406.84px;font-size:12px;line-height:12px;color:#141414;letter-spacing:-0.35px;right:232px;">363 635,00</div>
<div class="t" style="top:406.84px;font-size:12px;line-height:12px;color:#141414;letter-spacing:-0.35px;right:153.70000000000005px;">432 421,05</div>
<div class="t" style="top:406.84px;font-size:12px;line-height:12px;color:#141414;letter-spacing:-0.2px;left:1135.3px;">PLN</div>
<div class="r" style="left:267px;top:424px;width:991px;height:23px;background:#F2F2F2;"></div>
<svg class="r" style="left:274px;top:429px;" width="20" height="14" viewBox="0 0 20 14"><path d="M1.9 1 H5 L4.4 8.3 H2.5 Z" fill="#D23B2B"/><rect x="2.4" y="9.5" width="2.2" height="2.2" fill="#D23B2B"/><circle cx="11.5" cy="6.3" r="5" fill="none" stroke="#D23B2B" stroke-width="1.2"/><path d="M11.5 2.8V6.6H14.6" fill="none" stroke="#D23B2B" stroke-width="1.2"/></svg>
<div class="t" style="top:429.84px;font-size:12px;line-height:12px;color:#141414;letter-spacing:-0.35px;left:301.6px;">10-09-2015</div>
<div class="t" style="top:429.84px;font-size:12px;line-height:12px;color:#141414;letter-spacing:-0.35px;left:366px;">21:09</div>
<div class="t" style="top:429.84px;font-size:12px;line-height:12px;color:#141414;letter-spacing:-0.35px;left:408.9px;">53/2015</div>
<div class="t" style="top:429.84px;font-size:12px;line-height:12px;color:#141414;letter-spacing:-0.05px;left:471.3px;">Proces ofertowy ERIE</div>
<div class="t" style="top:429.84px;font-size:12px;line-height:12px;color:#141414;letter-spacing:-0.35px;left:662px;">Hurtownia ERIE</div>
<div class="r" style="left:757px;top:427px;width:40.875px;height:17px;background:linear-gradient(90deg,#A9D6E8,#DDF0F8);box-sizing:border-box;border:1px solid #9ACDE2;"></div>
<div class="t" style="top:429.84px;font-size:12px;line-height:12px;color:#141414;letter-spacing:-0.35px;right:469px;">75,00 %</div>
<div class="t" style="top:429.84px;font-size:12px;line-height:12px;color:#141414;letter-spacing:-0.5px;left:820.5px;">Szef Szef</div>
<div class="t" style="top:429.84px;font-size:12px;line-height:12px;color:#141414;letter-spacing:-0.35px;left:916.5px;">OE 53/C...</div>
<div class="t" style="top:429.84px;font-size:12px;line-height:12px;color:#141414;letter-spacing:-0.35px;right:232px;">57 037,50</div>
<div class="t" style="top:429.84px;font-size:12px;line-height:12px;color:#141414;letter-spacing:-0.35px;right:153.70000000000005px;">59 599,13</div>
<div class="t" style="top:429.84px;font-size:12px;line-height:12px;color:#141414;letter-spacing:-0.2px;left:1135.3px;">PLN</div>
<div class="t" style="top:452.84px;font-size:12px;line-height:12px;color:#141414;letter-spacing:-0.35px;left:301.6px;">10-09-2015</div>
<div class="t" style="top:452.84px;font-size:12px;line-height:12px;color:#141414;letter-spacing:-0.35px;left:366px;">21:09</div>
<div class="t" style="top:452.84px;font-size:12px;line-height:12px;color:#141414;letter-spacing:-0.35px;left:408.9px;">52/2015</div>
<div class="t" style="top:452.84px;font-size:12px;line-height:12px;color:#141414;letter-spacing:-0.05px;left:471.3px;">Proces ofertowy Jaś i Małgosia</div>
<div class="t" style="top:452.84px;font-size:12px;line-height:12px;color:#141414;letter-spacing:-0.35px;left:662px;">PPHU Jaś i Mał...</div>
<div class="r" style="left:757px;top:450px;width:5.45px;height:17px;background:linear-gradient(90deg,#A9D6E8,#DDF0F8);box-sizing:border-box;border:1px solid #9ACDE2;"></div>
<div class="t" style="top:452.84px;font-size:12px;line-height:12px;color:#141414;letter-spacing:-0.35px;right:469px;">10,00 %</div>
<div class="t" style="top:452.84px;font-size:12px;line-height:12px;color:#141414;letter-spacing:-0.5px;left:820.5px;">Szef Szef</div>
<div class="t" style="top:452.84px;font-size:12px;line-height:12px;color:#141414;letter-spacing:-0.35px;left:916.5px;">OE 52/C...</div>
<div class="t" style="top:452.84px;font-size:12px;line-height:12px;color:#141414;letter-spacing:-0.35px;right:232px;">1 774,90</div>
<div class="t" style="top:452.84px;font-size:12px;line-height:12px;color:#141414;letter-spacing:-0.35px;right:153.70000000000005px;">2 131,91</div>
<div class="t" style="top:452.84px;font-size:12px;line-height:12px;color:#141414;letter-spacing:-0.2px;left:1135.3px;">PLN</div>
<div class="r" style="left:267px;top:470px;width:991px;height:23px;background:#F2F2F2;"></div>
<svg class="r" style="left:274px;top:475px;" width="20" height="14" viewBox="0 0 20 14"><path d="M1.9 1 H5 L4.4 8.3 H2.5 Z" fill="#D23B2B"/><rect x="2.4" y="9.5" width="2.2" height="2.2" fill="#D23B2B"/><circle cx="11.5" cy="6.3" r="5" fill="none" stroke="#D23B2B" stroke-width="1.2"/><path d="M11.5 2.8V6.6H14.6" fill="none" stroke="#D23B2B" stroke-width="1.2"/></svg>
<div class="t" style="top:475.84px;font-size:12px;line-height:12px;color:#141414;letter-spacing:-0.35px;left:301.6px;">10-09-2015</div>
<div class="t" style="top:475.84px;font-size:12px;line-height:12px;color:#141414;letter-spacing:-0.35px;left:366px;">21:09</div>
<div class="t" style="top:475.84px;font-size:12px;line-height:12px;color:#141414;letter-spacing:-0.35px;left:408.9px;">3/2015</div>
<div class="t" style="top:475.84px;font-size:12px;line-height:12px;color:#141414;letter-spacing:-0.05px;left:471.3px;">Promowanie nowego produktu</div>
<div class="t" style="top:475.84px;font-size:12px;line-height:12px;color:#141414;letter-spacing:-0.35px;left:662px;">Ins Bank</div>
<div class="r" style="left:757px;top:473px;width:46.325px;height:17px;background:linear-gradient(90deg,#A9D6E8,#DDF0F8);box-sizing:border-box;border:1px solid #9ACDE2;"></div>
<div class="t" style="top:475.84px;font-size:12px;line-height:12px;color:#141414;letter-spacing:-0.35px;right:469px;">85,00 %</div>
<div class="t" style="top:475.84px;font-size:12px;line-height:12px;color:#141414;letter-spacing:-0.5px;left:820.5px;">Szef Szef</div>
<div class="t" style="top:475.84px;font-size:12px;line-height:12px;color:#141414;letter-spacing:-0.35px;left:916.5px;">OE 3/CE...</div>
<div class="t" style="top:475.84px;font-size:12px;line-height:12px;color:#141414;letter-spacing:-0.35px;right:232px;">1 289,92</div>
<div class="t" style="top:475.84px;font-size:12px;line-height:12px;color:#141414;letter-spacing:-0.35px;right:153.70000000000005px;">1 586,60</div>
<div class="t" style="top:475.84px;font-size:12px;line-height:12px;color:#141414;letter-spacing:-0.2px;left:1135.3px;">PLN</div>
<svg class="r" style="left:274px;top:498px;" width="20" height="14" viewBox="0 0 20 14"><path d="M1.9 1 H5 L4.4 8.3 H2.5 Z" fill="#D23B2B"/><rect x="2.4" y="9.5" width="2.2" height="2.2" fill="#D23B2B"/><circle cx="11.5" cy="6.3" r="5" fill="none" stroke="#D23B2B" stroke-width="1.2"/><path d="M11.5 2.8V6.6H14.6" fill="none" stroke="#D23B2B" stroke-width="1.2"/></svg>
<div class="t" style="top:498.84px;font-size:12px;line-height:12px;color:#141414;letter-spacing:-0.35px;left:301.6px;">10-09-2015</div>
<div class="t" style="top:498.84px;font-size:12px;line-height:12px;color:#141414;letter-spacing:-0.35px;left:366px;">21:09</div>
<div class="t" style="top:498.84px;font-size:12px;line-height:12px;color:#141414;letter-spacing:-0.35px;left:408.9px;">4/2015</div>
<div class="t" style="top:498.84px;font-size:12px;line-height:12px;color:#141414;letter-spacing:-0.05px;left:471.3px;">Promowanie nowego produktu</div>
<div class="t" style="top:498.84px;font-size:12px;line-height:12px;color:#141414;letter-spacing:-0.35px;left:662px;">InsCard SA</div>
<div class="r" style="left:757px;top:496px;width:16.35px;height:17px;background:linear-gradient(90deg,#A9D6E8,#DDF0F8);box-sizing:border-box;border:1px solid #9ACDE2;"></div>
<div class="t" style="top:498.84px;font-size:12px;line-height:12px;color:#141414;letter-spacing:-0.35px;right:469px;">30,00 %</div>
<div class="t" style="top:498.84px;font-size:12px;line-height:12px;color:#141414;letter-spacing:-0.5px;left:820.5px;">Szef Szef</div>
<div class="t" style="top:498.84px;font-size:12px;line-height:12px;color:#141414;letter-spacing:-0.35px;left:916.5px;">OE 4/CE...</div>
<div class="t" style="top:498.84px;font-size:12px;line-height:12px;color:#141414;letter-spacing:-0.35px;right:232px;">1 289,92</div>
<div class="t" style="top:498.84px;font-size:12px;line-height:12px;color:#141414;letter-spacing:-0.35px;right:153.70000000000005px;">1 586,60</div>
<div class="t" style="top:498.84px;font-size:12px;line-height:12px;color:#141414;letter-spacing:-0.2px;left:1135.3px;">PLN</div>
<div class="r" style="left:1258px;top:192px;width:12px;height:325px;background:#F4F4F4;"></div>
<div class="r" style="left:1258px;top:210px;width:12px;height:63px;background:#C2C2C2;"></div>
<svg class="r" style="left:1259px;top:196px;" width="10" height="8" viewBox="0 0 10 8"><path d="M1 6 L5 2 L9 6" fill="none" stroke="#A0A0A0"/></svg>
<svg class="r" style="left:1259px;top:505px;" width="10" height="8" viewBox="0 0 10 8"><path d="M1 2 L5 6 L9 2" fill="none" stroke="#A0A0A0"/></svg>
<div class="r" style="left:267px;top:517px;width:1003px;height:8px;background:#EEEEEE;"></div>
<div class="r" style="left:267px;top:524px;width:1003px;height:1px;background:#D3D3D3;"></div>
<div class="r" style="left:267px;top:525px;width:92px;height:25px;background:#FFFFFF;"></div>
<div class="r" style="left:267px;top:550px;width:1003px;height:1px;background:#D3D3D3;"></div>
<div class="t" style="top:531.10px;font-size:11.7px;line-height:11.7px;color:#7C7C7C;letter-spacing:-0.1px;left:277.2px;">WIZYTÓWKA</div>
<div class="t" style="top:531.10px;font-size:11.7px;line-height:11.7px;color:#7C7C7C;letter-spacing:-0.1px;left:369.3px;">PODSTAWOWE</div>
<div class="t" style="top:531.10px;font-size:11.7px;line-height:11.7px;color:#7C7C7C;letter-spacing:-0.1px;left:475px;">OFERTY</div>
<div class="t" style="top:531.10px;font-size:11.7px;line-height:11.7px;color:#7C7C7C;letter-spacing:-0.1px;left:537px;">FINANSE</div>
<div class="t" style="top:531.10px;font-size:11.7px;line-height:11.7px;color:#7C7C7C;letter-spacing:-0.1px;left:604.5px;">OPIS</div>
<div class="t" style="top:531.10px;font-size:11.7px;line-height:11.7px;color:#7C7C7C;letter-spacing:-0.1px;left:651px;">KOMENTARZE</div>
<div class="t" style="top:531.10px;font-size:11.7px;line-height:11.7px;color:#7C7C7C;letter-spacing:-0.1px;left:748px;">DZIAŁANIA</div>
<div class="t" style="top:531.10px;font-size:11.7px;line-height:11.7px;color:#7C7C7C;letter-spacing:-0.1px;left:829px;">HISTORIA</div>
<div class="r" style="left:267px;top:566px;width:74px;height:52px;background:#808080;"></div>
<div class="t" style="top:572.53px;font-size:38px;line-height:38px;color:#E8E8E8;letter-spacing:-2.5px;left:280px;">CP</div>
<div class="t" style="top:570.05px;font-size:22.5px;line-height:22.5px;color:#707070;letter-spacing:-0.3px;left:352px;">1/2015</div>
<svg class="r" style="left:430px;top:575px;" width="12" height="9" viewBox="0 0 12 9"><path d="M1 2 L6 7 L11 2" fill="none" stroke="#707070" stroke-width="1.6"/></svg>
<div class="t" style="top:602.00px;font-size:15px;line-height:15px;color:#7C7C7C;left:352px;">Kosmetyki ABCDE</div>
<div class="t" style="top:571.88px;font-size:22px;line-height:22px;color:#7A7A7A;right:49px;font-style:italic;">Prezentacja <span style="color:#BDBDBD">•</span> 20,00%</div>
<div class="t" style="top:600.30px;font-size:15px;line-height:15px;color:#7C7C7C;right:48px;">Opiekun: Szef Szef</div>
<svg class="r" style="left:1259px;top:555px;" width="10" height="8" viewBox="0 0 10 8"><path d="M1 6.5 L5 2 L9 6.5" fill="none" stroke="#A8A8A8" stroke-width="1"/></svg>
<div class="t" style="top:704.84px;font-size:12px;line-height:12px;color:#222;letter-spacing:-0.3px;left:1261px;">+/-</div>
<div class="r" style="left:267px;top:122px;width:75px;height:52px;background:#DE6619;"></div>
<div class="r" style="left:267px;top:174px;width:75px;height:241px;background:#E8792C;"></div>
<div class="t" style="top:127.39px;font-size:39px;line-height:39px;color:#FBDCC6;letter-spacing:-2.5px;left:277px;">CO</div>
<div class="t" style="left:318px;top:405px;font-size:36px;line-height:36px;color:#EB8C4E;letter-spacing:-0.7px;transform-origin:0 0;transform:rotate(-90deg) translate(0,-30.5px);">Procesy</div>
<div class="r" style="left:342px;top:122px;width:172px;height:30px;background:#FFFFFF;"></div>
<div class="t" style="top:125.53px;font-size:23px;line-height:23px;color:#111;letter-spacing:-0.25px;left:353.5px;">Moje procesy</div>
<svg class="r" style="left:496px;top:132px;" width="14" height="9" viewBox="0 0 14 9"><path d="M2 2 L7 7 L12 2" fill="none" stroke="#111" stroke-width="1.8"/></svg>
<div class="r" style="left:267px;top:152px;width:473px;height:264px;box-shadow:2px 2px 2.5px rgba(0,0,0,0.4);"></div>
<div class="r" style="left:342px;top:152px;width:398px;height:264px;background:#FFFFFF;box-sizing:border-box;border:1px solid #069CDD;border-left:none;"></div>
<div class="r" style="left:267px;top:415px;width:75px;height:1px;background:#069CDD;"></div>
<div class="r" style="left:342px;top:185px;width:249px;height:31px;background:#1283D8;"></div>
<div class="r" style="left:342px;top:247px;width:249px;height:30px;background:#F2F2F2;"></div>
<div class="r" style="left:592px;top:153px;width:4px;height:262px;background:#EBEBEB;"></div>
<div class="t" style="top:163.13px;font-size:15.2px;line-height:15.2px;color:#1a1a1a;letter-spacing:-0.1px;left:356.5px;">Wszystkie procesy</div>
<div class="t" style="top:194.13px;font-size:15.2px;line-height:15.2px;color:#FFFFFF;letter-spacing:-0.1px;left:356.5px;">Moje procesy</div>
<div class="t" style="top:225.13px;font-size:15.2px;line-height:15.2px;color:#1a1a1a;letter-spacing:-0.1px;left:356.5px;">Procesy zakończone</div>
<div class="t" style="top:255.63px;font-size:15.2px;line-height:15.2px;color:#1a1a1a;letter-spacing:-0.1px;left:356.5px;">Procesy trwające</div>
<div class="t" style="top:169.11px;font-size:10.5px;line-height:10.5px;color:#8C8C8C;letter-spacing:-0.1px;left:600.7px;">WIDOKI POWIĄZANE</div>
<div class="t" style="top:192.60px;font-size:13px;line-height:13px;color:#1a1a1a;letter-spacing:-0.05px;left:600.5px;">Moje oferty</div>
<div class="t" style="top:219.60px;font-size:13px;line-height:13px;color:#1a1a1a;letter-spacing:-0.05px;left:600.5px;">Moje działania</div>
<div class="t" style="top:246.60px;font-size:13px;line-height:13px;color:#1a1a1a;letter-spacing:-0.05px;left:600.5px;">Klient poczty</div>
<div class="t" style="top:273.60px;font-size:13px;line-height:13px;color:#1a1a1a;letter-spacing:-0.05px;left:600.5px;">Klienci standardowi</div>
<div class="t" style="top:300.60px;font-size:13px;line-height:13px;color:#1a1a1a;letter-spacing:-0.05px;left:600.5px;">Asortyment</div>
<div class="t" style="top:327.60px;font-size:13px;line-height:13px;color:#1a1a1a;letter-spacing:-0.05px;left:600.5px;">Kalendarz</div>
<div class="t" style="top:354.60px;font-size:13px;line-height:13px;color:#1a1a1a;letter-spacing:-0.05px;left:600.5px;">Biblioteka dokumentów</div>
<svg class="r" style="left:566px;top:388px;" width="22" height="22" viewBox="0 0 22 22"><g transform="translate(10.8 10.9)" fill="none" stroke="#7A7A7A" stroke-width="1.1" stroke-linejoin="round"><circle r="2.2"/><path d="M0.73 -5.55 L2.40 -9.29 L4.87 -8.27 L3.41 -4.44 L4.44 -3.41 L8.27 -4.87 L9.29 -2.40 L5.55 -0.73 L5.55 0.73 L9.29 2.40 L8.27 4.87 L4.44 3.41 L3.41 4.44 L4.87 8.27 L2.40 9.29 L0.73 5.55 L-0.73 5.55 L-2.40 9.29 L-4.87 8.27 L-3.41 4.44 L-4.44 3.41 L-8.27 4.87 L-9.29 2.40 L-5.55 0.73 L-5.55 -0.73 L-9.29 -2.40 L-8.27 -4.87 L-4.44 -3.41 L-3.41 -4.44 L-4.87 -8.27 L-2.40 -9.29 L-0.73 -5.55 Z"/></g></svg>
</body></html>
